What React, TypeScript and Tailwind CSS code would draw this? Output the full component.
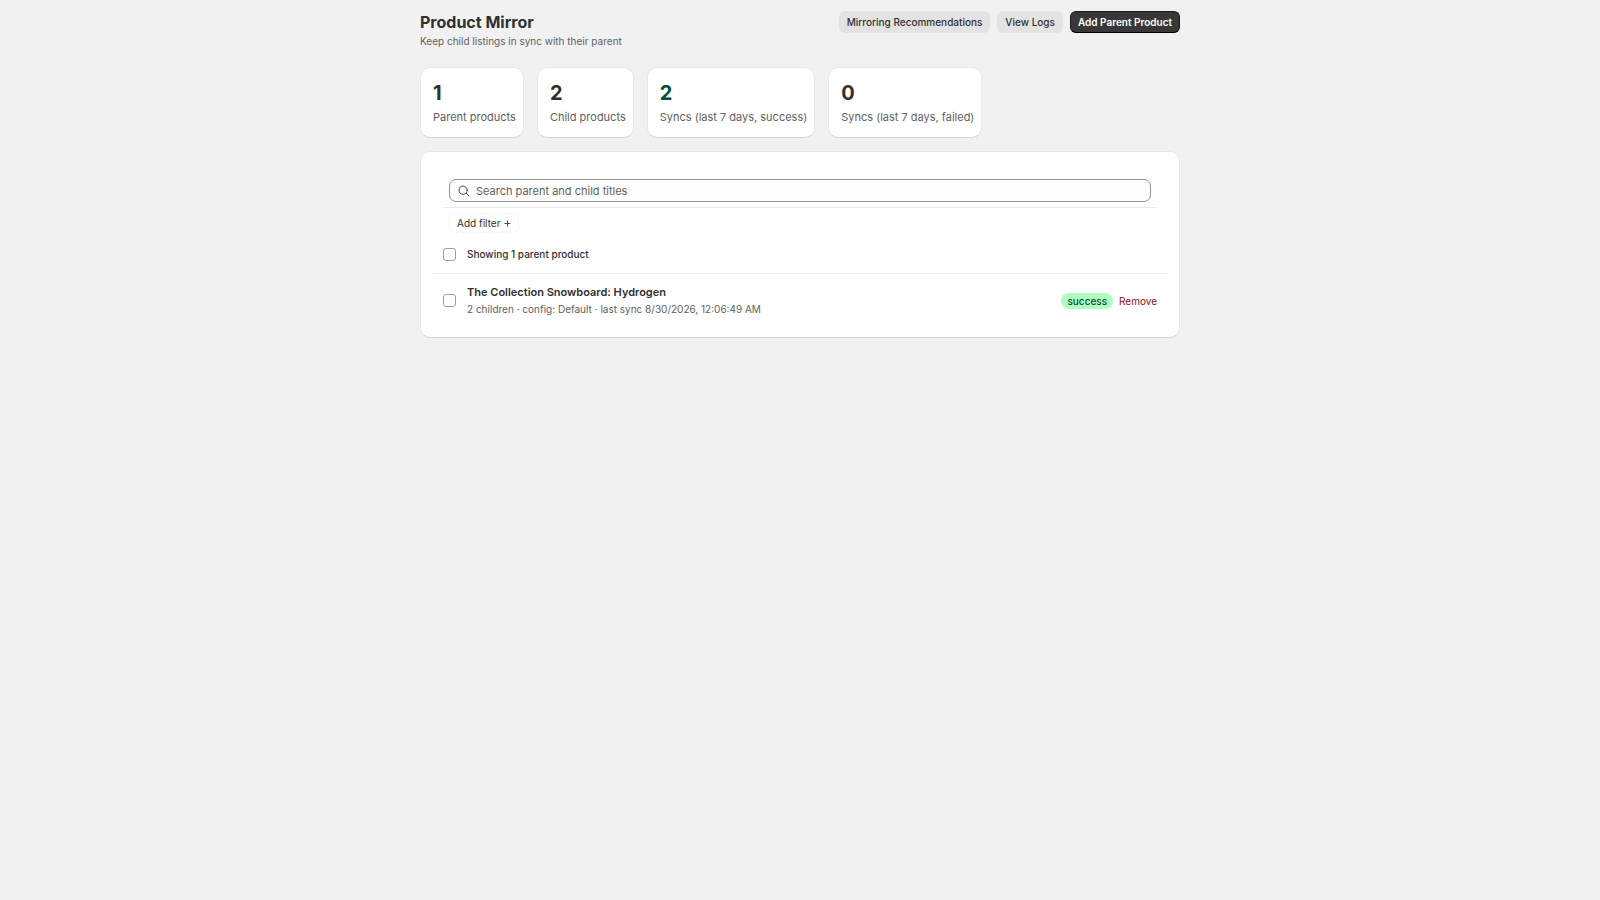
import React, { useState } from 'react';

const stats = [
  { label: 'Parent products', value: 1 },
  { label: 'Child products', value: 2 },
  { label: 'Syncs (last 7 days, success)', value: 2, success: true },
  { label: 'Syncs (last 7 days, failed)', value: 0 },
];

const products = [
  {
    id: 'hydrogen',
    title: 'The Collection Snowboard: Hydrogen',
    details: '2 children · config: Default · last sync 8/30/2026, 12:06:49 AM',
    status: 'success',
  },
];

const card = 'bg-white rounded-[10px] border border-[#e8e8e8] border-b-[#d4d4d4]';
const checkbox = 'appearance-none block w-[13px] h-[13px] shrink-0 rounded-[3px] border border-[#a0a0a0] bg-white checked:bg-[#303030]';
const secondaryButton = 'h-[22px] px-2 rounded-md bg-[#e3e3e3] text-[#303030] text-[10px] font-medium hover:bg-[#d9d9d9]';

export default function App() {
  const [query, setQuery] = useState('');
  const [selected, setSelected] = useState<string[]>([]);

  const toggle = (id: string) => {
    setSelected(selected.includes(id) ? selected.filter((s) => s !== id) : [...selected, id]);
  };

  return (
    <div className="min-h-screen bg-[#f1f1f1] font-['Inter',sans-serif] text-[#303030]">
      <main className="mx-auto max-w-[760px] pt-[11px]">
        <header className="flex items-start justify-between">
          <div>
            <h1 className="text-[16px] leading-[22px] font-bold">Product Mirror</h1>
            <p className="text-[10px] leading-4 text-[#616161]">Keep child listings in sync with their parent</p>
          </div>
          <div className="flex items-center gap-[7px]">
            <button className={secondaryButton}>Mirroring Recommendations</button>
            <button className={secondaryButton}>View Logs</button>
            <button className="h-[22px] px-[7px] rounded-md bg-[#383838] text-white text-[10px] font-semibold border border-[#1a1a1a] border-b-black">
              Add Parent Product
            </button>
          </div>
        </header>

        <section className="flex flex-wrap gap-[13px] mt-[18px]">
          {stats.map((stat) => (
            <div key={stat.label} className={`${card} pl-3 pr-[7px] pt-[11px] pb-[10px]`}>
              <p className={`text-[20px] leading-7 font-bold ${stat.success ? 'text-[#014b40]' : ''}`}>{stat.value}</p>
              <p className="text-[11px] leading-5 text-[#616161]">{stat.label}</p>
            </div>
          ))}
        </section>

        <section className={`${card} mt-[13px] px-3 pt-[27px] pb-[10px]`}>
          <div className="mx-[10px] px-[6px] pb-[5px] border-b border-[#ebebeb]">
            <div className="flex items-center gap-[6px] h-[23px] px-2 rounded-[7px] border border-[#949494] bg-[#fdfdfd]">
              <svg className="w-3 h-3 shrink-0" viewBox="0 0 12 12" fill="none" stroke="#4a4a4a" strokeWidth="1" strokeLinecap="round" aria-hidden="true">
                <circle cx="5.2" cy="5.2" r="4.1" />
                <path d="M8.3 8.3L11 11" />
              </svg>
              <input
                type="text"
                aria-label="Search parent and child titles"
                placeholder="Search parent and child titles"
                value={query}
                onChange={(e) => setQuery(e.target.value)}
                className="flex-1 text-[11px] leading-4 outline-none placeholder:text-[#616161]"
              />
            </div>
          </div>

          <div className="px-4 pt-[5px]">
            <button className="flex items-center gap-1 h-5 px-[7px] rounded-md border border-dashed border-[#f4f4f4] text-[10px]">
              Add filter
              <svg className="w-[7px] h-[7px]" viewBox="0 0 7 7" stroke="#4a4a4a" strokeWidth="1" aria-hidden="true">
                <path d="M3.5 0.5V6.5M0.5 3.5H6.5" />
              </svg>
            </button>
          </div>

          <label className="flex items-center gap-[11px] px-[10px] pt-[13px] pb-[11px] text-[10px] leading-4 font-medium border-b border-[#f0f0f0]">
            <input
              type="checkbox"
              className={checkbox}
              checked={selected.length === products.length}
              onChange={(e) => setSelected(e.target.checked ? products.map((p) => p.id) : [])}
            />
            Showing 1 parent product
          </label>

          <ul>
            {products.map((product) => (
              <li key={product.id} className="flex items-center gap-[11px] px-[10px] py-[10px]">
                <input
                  type="checkbox"
                  aria-label={`Select ${product.title}`}
                  className={checkbox}
                  checked={selected.includes(product.id)}
                  onChange={() => toggle(product.id)}
                />
                <div className="flex-1">
                  <h2 className="text-[11px] leading-4 font-semibold">{product.title}</h2>
                  <p className="mt-px text-[10px] leading-4 text-[#616161]">{product.details}</p>
                </div>
                <div className="flex items-center gap-[6px]">
                  <span className="px-[6px] rounded-full bg-[#affebf] text-[#014b40] text-[10px] leading-4 font-medium">{product.status}</span>
                  <button className="text-[10px] leading-4 text-[#8e0b21] hover:underline">Remove</button>
                </div>
              </li>
            ))}
          </ul>
        </section>
      </main>
    </div>
  );
}
